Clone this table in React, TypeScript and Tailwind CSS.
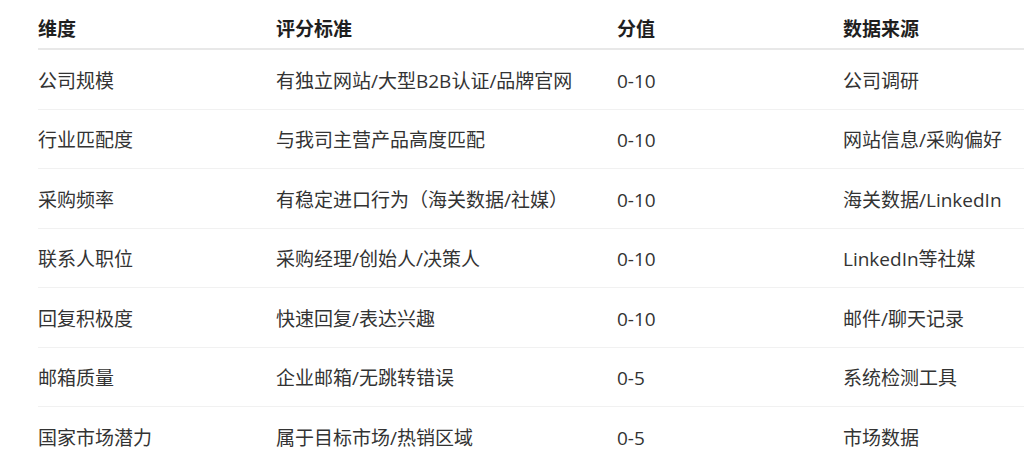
import React from "react";

const rows: [string, string, string, string][] = [
  ["公司规模", "有独立网站/大型B2B认证/品牌官网", "0-10", "公司调研"],
  ["行业匹配度", "与我司主营产品高度匹配", "0-10", "网站信息/采购偏好"],
  ["采购频率", "有稳定进口行为（海关数据/社媒）", "0-10", "海关数据/LinkedIn"],
  ["联系人职位", "采购经理/创始人/决策人", "0-10", "LinkedIn等社媒"],
  ["回复积极度", "快速回复/表达兴趣", "0-10", "邮件/聊天记录"],
  ["邮箱质量", "企业邮箱/无跳转错误", "0-5", "系统检测工具"],
  ["国家市场潜力", "属于目标市场/热销区域", "0-5", "市场数据"],
];

const headers = ["维度", "评分标准", "分值", "数据来源"];

export default function App() {
  return (
    <div
      className="w-[1024px] h-[473px] overflow-hidden bg-white pl-[38px]"
      style={{ fontFamily: '"Open Sans", "Noto Sans CJK SC", sans-serif' }}
    >
      <div className="grid grid-cols-[238px_341px_226px_1fr] border-b-2 border-[#e8e8e8] pt-[15px] pb-[5px] text-[19px] leading-[28px] font-bold text-[#1f1f1f]">
        {headers.map((h) => (
          <div key={h} className="whitespace-nowrap">{h}</div>
        ))}
      </div>
      {rows.map((r, i) => (
        <div
          key={i}
          className={`grid grid-cols-[238px_341px_226px_1fr] pt-[16.5px] pb-[13.5px] text-[19px] leading-[28.5px] text-[#333333] ${
            i < rows.length - 1 ? "border-b border-[#f1f1f1]" : ""
          }`}
        >
          {r.map((c, j) => (
            <div key={j} className="whitespace-nowrap">{c}</div>
          ))}
        </div>
      ))}
    </div>
  );
}
